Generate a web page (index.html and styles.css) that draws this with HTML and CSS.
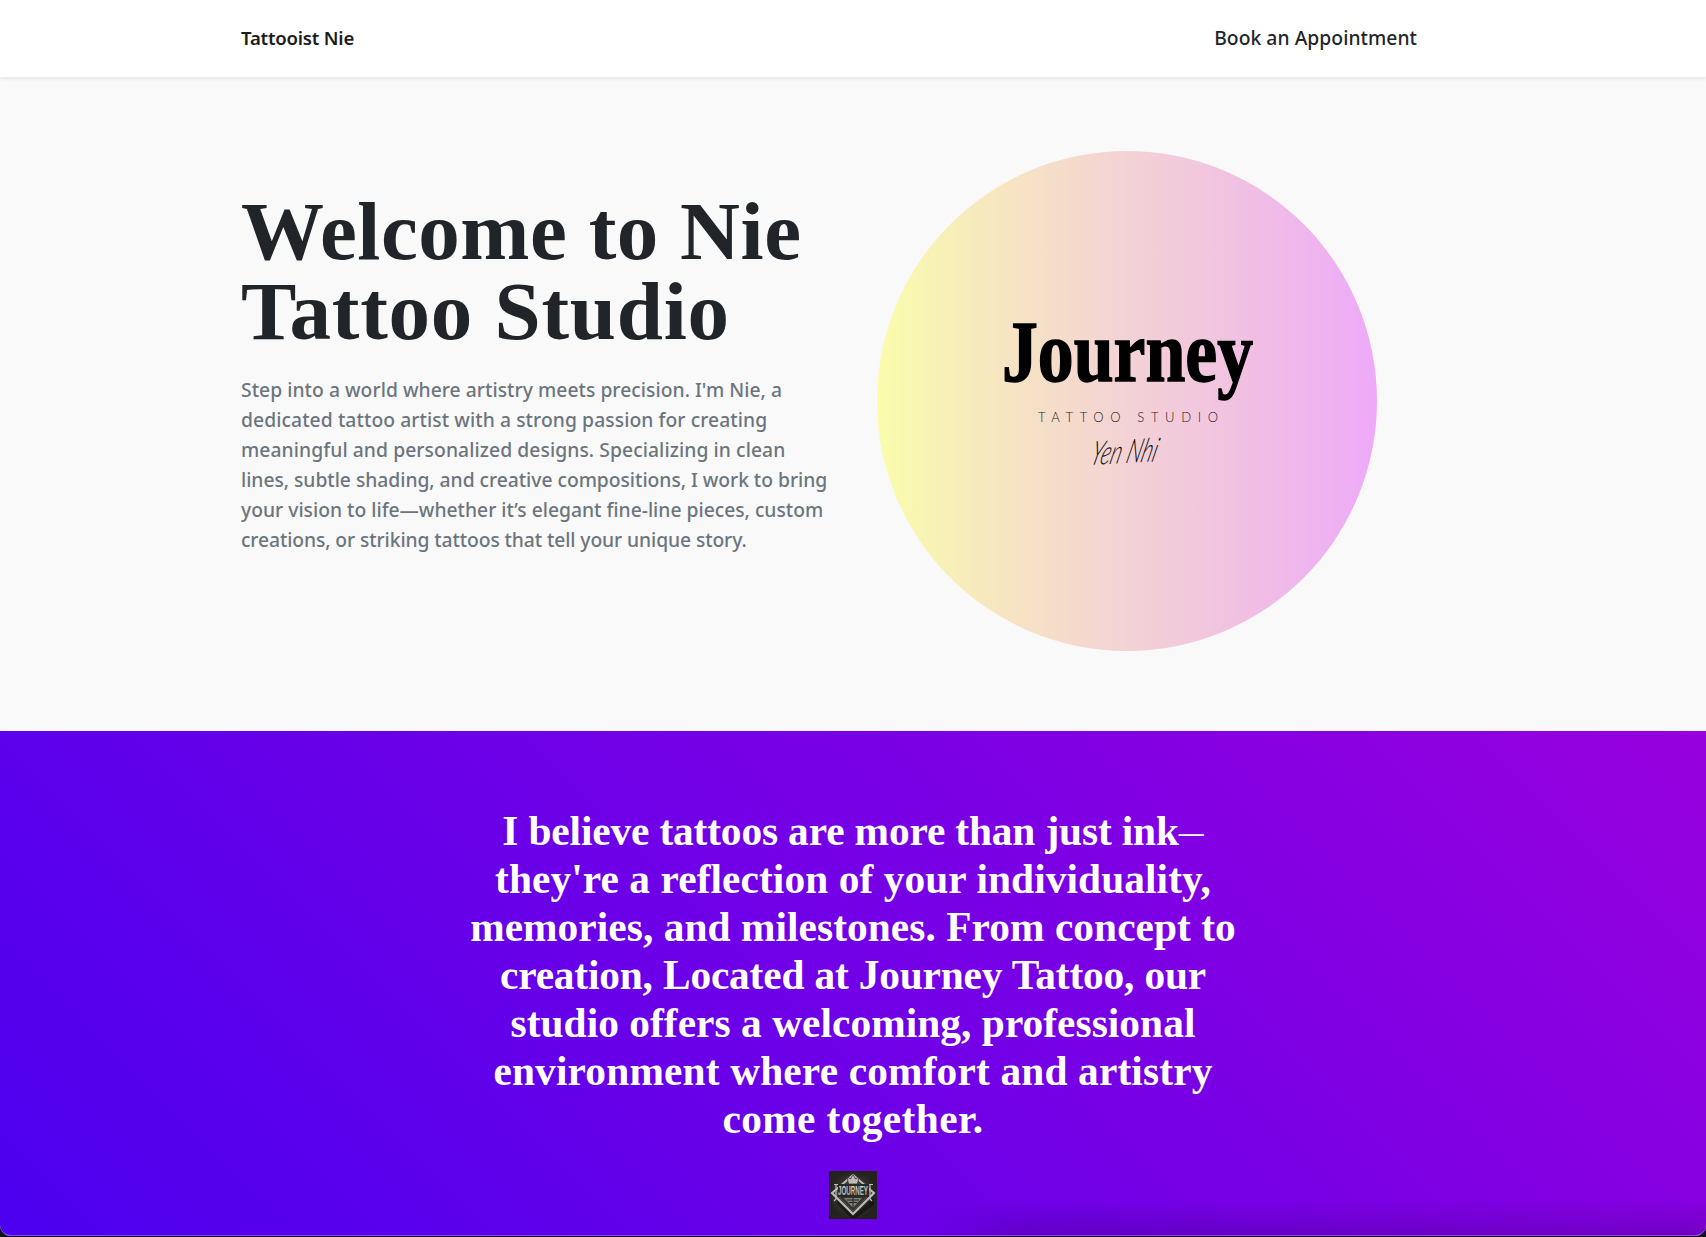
FILE: index.html
```html
<!DOCTYPE html>
<html lang="en">
<head>
<meta charset="utf-8">
<title>Tattooist Nie</title>
<link rel="stylesheet" href="styles.css">
</head>
<body>
<div class="page">
  <nav class="navbar">
    <a class="brand">Tattooist Nie</a>
    <a class="nav-link">Book an Appointment</a>
  </nav>
  <header class="hero">
    <div class="hero-copy">
      <h1 class="title"><span class="line t1">Welcome to Nie</span> <span class="line t2">Tattoo Studio</span></h1>
      <p class="lead">
        <span class="line p1">Step into a world where artistry meets precision. I'm Nie, a</span>
        <span class="line p2">dedicated tattoo artist with a strong passion for creating</span>
        <span class="line p3">meaningful and personalized designs. Specializing in clean</span>
        <span class="line p4">lines, subtle shading, and creative compositions, I work to bring</span>
        <span class="line p5">your vision to life—whether it’s elegant fine-line pieces, custom</span>
        <span class="line p6">creations, or striking tattoos that tell your unique story.</span>
      </p>
    </div>
    <svg class="hero-logo" viewBox="0 0 500 500" width="500" height="500">
      <defs>
        <linearGradient id="glow">
          <stop offset="0" stop-color="#fafdac"/>
          <stop offset=".22" stop-color="#f6e8be"/>
          <stop offset=".38" stop-color="#f5dbcb"/>
          <stop offset=".5" stop-color="#f3d2d5"/>
          <stop offset=".7" stop-color="#f1c3e0"/>
          <stop offset="1" stop-color="#eea9f9"/>
        </linearGradient>
      </defs>
      <circle cx="250" cy="250" r="250" fill="url(#glow)"/>
      <text class="logo-name" x="125" y="230" textLength="251" lengthAdjust="spacingAndGlyphs">Journey</text>
      <text class="logo-sub" x="161" y="271" textLength="180">TATTOO STUDIO</text>
      <text class="logo-sign" x="0" y="0" textLength="66" lengthAdjust="spacingAndGlyphs" transform="translate(212 314) rotate(-3) skewX(-18)">Yen Nhi</text>
    </svg>
  </header>
  <section class="quote">
    <h2 class="quote-text">
      <span class="line q1">I believe tattoos are more than just ink<span class="dash">—</span></span>
      <span class="line q2">they're a reflection of your individuality,</span>
      <span class="line q3">memories, and milestones. From concept to</span>
      <span class="line q4">creation, Located at Journey Tattoo, our</span>
      <span class="line q5">studio offers a welcoming, professional</span>
      <span class="line q6">environment where comfort and artistry</span>
      <span class="line q7">come together.</span>
    </h2>
    <svg class="emblem" viewBox="0 0 48 48" width="48" height="48">
      <defs>
        <radialGradient id="wall"><stop offset="0" stop-color="#55534f"/><stop offset="1" stop-color="#24221f"/></radialGradient>
        <linearGradient id="steel" x1="0" y1="0" x2="0" y2="1"><stop offset="0" stop-color="#e4e4e2"/><stop offset="1" stop-color="#9b9b9b"/></linearGradient>
      </defs>
      <rect width="48" height="48" fill="url(#wall)"/>
      <path d="M9 30 24 45 45 26v8L27 47H22L7 32z" fill="#12110f" opacity=".7"/>
      <path d="M24 4 45 22 24 43 3 22z" fill="#35332f" stroke="#bdbdbb" stroke-width="2"/>
      <path d="M24 7 42 22 24 40 6 22z" fill="none" stroke="#55534f" stroke-width=".8"/>
      <path d="M18 6 21.500 8 24 3.500 26.500 8 30 6 28.500 13h-9z" fill="#bcbcba" stroke="#292724" stroke-width=".7"/>
      <path d="M15 27H33L24 37z" fill="#7c7c79"/>
      <path d="M18 29h12M20 31.500h8M24 27v10" stroke="#292724"/>
      <rect x="9" y="13" width="31" height="13" fill="#292825"/>
      <text class="emblem-name" x="9" y="24" textLength="30" lengthAdjust="spacingAndGlyphs">JOURNEY</text>
      <path d="M5 13.500h4M40 13.500h4M7 14v14l-2 2M41 14v14l2 2" fill="none" stroke="#bcbcba" stroke-width="1.200"/>
    </svg>
  </section>
  <div class="dock-shade"></div>
</div>
</body>
</html>
```
FILE: styles.css
```css
* { box-sizing: border-box; }
body { margin: 0; background: #10141c; color: #212529; font-family: "Noto Sans", sans-serif; }
.page { position: relative; width: 1706px; height: 1236px; overflow: hidden; border-radius: 0 0 11px 11px; background: #f9f9f9; }
.navbar { position: relative; display: flex; justify-content: space-between; align-items: center; height: 77px; padding: 0 289px 2px 241px; background: #fff; box-shadow: 0 2px 4px rgba(0, 0, 0, .075); }
.brand { font-size: 18.6px; font-weight: 600; color: #1c1c1c; letter-spacing: -.2px; }
.nav-link { font-size: 19.3px; font-weight: 500; letter-spacing: .05px; }
.hero { display: flex; justify-content: space-between; align-items: center; height: 654px; padding: 0 329px 6px 241px; }
.hero-copy { width: 600px; padding-bottom: 57px; }
.line { display: block; white-space: nowrap; }
.title { margin: 0 0 24px; font: bold 83px/80px "Liberation Serif", serif; }
.t1 { letter-spacing: .53px; }
.t2 { letter-spacing: .75px; }
.lead { margin: 0; font-size: 19.3px; font-weight: 500; line-height: 30px; color: #6c757d; }
.p1 { letter-spacing: .04px; }
.p2 { letter-spacing: .08px; }
.p3 { letter-spacing: .08px; }
.p4 { letter-spacing: -.03px; }
.p5 { letter-spacing: 0; }
.p6 { letter-spacing: -.1px; }
.hero-logo { display: block; flex: none; }
.logo-name { font: bold 86px "Liberation Serif", serif; stroke: #000; stroke-width: 1.5px; }
.logo-sub { font: 300 13px Lato, sans-serif; fill: #222; }
.logo-sign { font: italic 300 33px Lato, sans-serif; fill: #111; }
.quote { display: flex; flex-direction: column; align-items: center; height: 505px; padding-top: 76px; background: linear-gradient(45deg, #4b00ef, #9700de); }
.quote-text { margin: 0; color: #fff; text-align: center; font: bold 41.4px/48px "Liberation Serif", serif; }
.q1 { letter-spacing: -.15px; }
.q2 { letter-spacing: .07px; }
.q3 { letter-spacing: .05px; }
.q4 { letter-spacing: -.18px; }
.q5 { letter-spacing: .04px; }
.q6 { letter-spacing: .15px; }
.q7 { letter-spacing: .38px; }
.dash { font-size: 25px; line-height: 0; vertical-align: 4px; }
.emblem { display: block; flex: none; margin-top: 28px; }
.emblem-name { font: bold 13px "Liberation Sans", sans-serif; fill: url(#steel); }
/* soft shade along the lower right edge of the window */
.dock-shade { position: absolute; left: 930px; right: 0; bottom: 0; height: 36px; background: linear-gradient(to top, rgba(40, 0, 80, .2), rgba(40, 0, 80, 0)); -webkit-mask-image: linear-gradient(to right, transparent, #000 90px); mask-image: linear-gradient(to right, transparent, #000 90px); }
.page::after { content: ""; position: absolute; inset: 0; border-bottom: 1px solid rgba(190, 120, 255, .55); border-radius: 0 0 11px 11px; }
```
